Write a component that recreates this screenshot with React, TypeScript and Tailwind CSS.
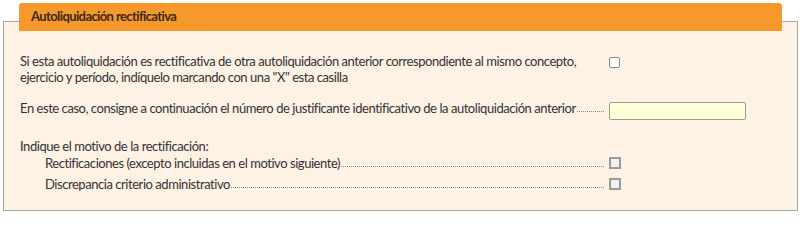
const font = { fontFamily: '"Lato", "Liberation Sans", sans-serif' }

function Leader() {
	return <span className="mx-[1px] mb-[4px] flex-1 self-end border-b border-dotted border-[#8c8c8c]" />
}

function Square() {
	return <span className="block h-[12px] w-[12px] shrink-0 border-2 border-[#9a9a9a] bg-[#f1f1f1]" />
}

export default function App() {
	return (
		<div
			className="h-[214px] w-[800px] bg-white pt-[21px] pl-[3px] text-[13px] tracking-[-0.45px] whitespace-nowrap text-[#333]"
			style={font}
		>
			<section className="h-[190px] w-[795px] border border-[#aaa59e] bg-[#fef2e5]">
				<header className="-mt-[19px] ml-[15px] flex h-[28px] w-[763px] items-center rounded-t-[3px] bg-[#f7982c] pl-[12px] font-bold tracking-[-0.6px] text-[#3b2a18]">
					Autoliquidación rectificativa
				</header>

				<div className="pl-[16px]">
					<div className="mt-[22px] flex">
						<p className="w-[589px] leading-[16px]">
							Si esta autoliquidación es rectificativa de otra autoliquidación anterior correspondiente al mismo concepto,
							<br />
							ejercicio y período, indíquelo marcando con una "X" esta casilla
						</p>
						<span className="mt-[4px] block h-[11px] w-[11px] rounded-[2px] border border-[#8a8a8a] bg-white" />
					</div>

					<div className="mt-[15px] flex items-start">
						<div className="flex w-[585px] leading-[16px]">
							<span>En este caso, consigne a continuación el número de justificante identificativo de la autoliquidación anterior</span>
							<Leader />
						</div>
						<input className="mt-[2px] ml-[4px] h-[18px] w-[137px] rounded-[2px] border border-[#a09c94] bg-[#ffffd8] outline-none" />
					</div>

					<p className="mt-[18px] leading-[16px]">Indique el motivo de la rectificación:</p>

					<div className="ml-[25px] mt-[1px] flex w-[576px] items-center gap-[4px] leading-[16px]">
						<div className="flex flex-1">
							<span>Rectificaciones (excepto incluidas en el motivo siguiente)</span>
							<Leader />
						</div>
						<Square />
					</div>
					<div className="ml-[25px] mt-[5px] flex w-[576px] items-center gap-[4px] leading-[16px]">
						<div className="flex flex-1">
							<span>Discrepancia criterio administrativo</span>
							<Leader />
						</div>
						<Square />
					</div>
				</div>
			</section>
		</div>
	)
}
